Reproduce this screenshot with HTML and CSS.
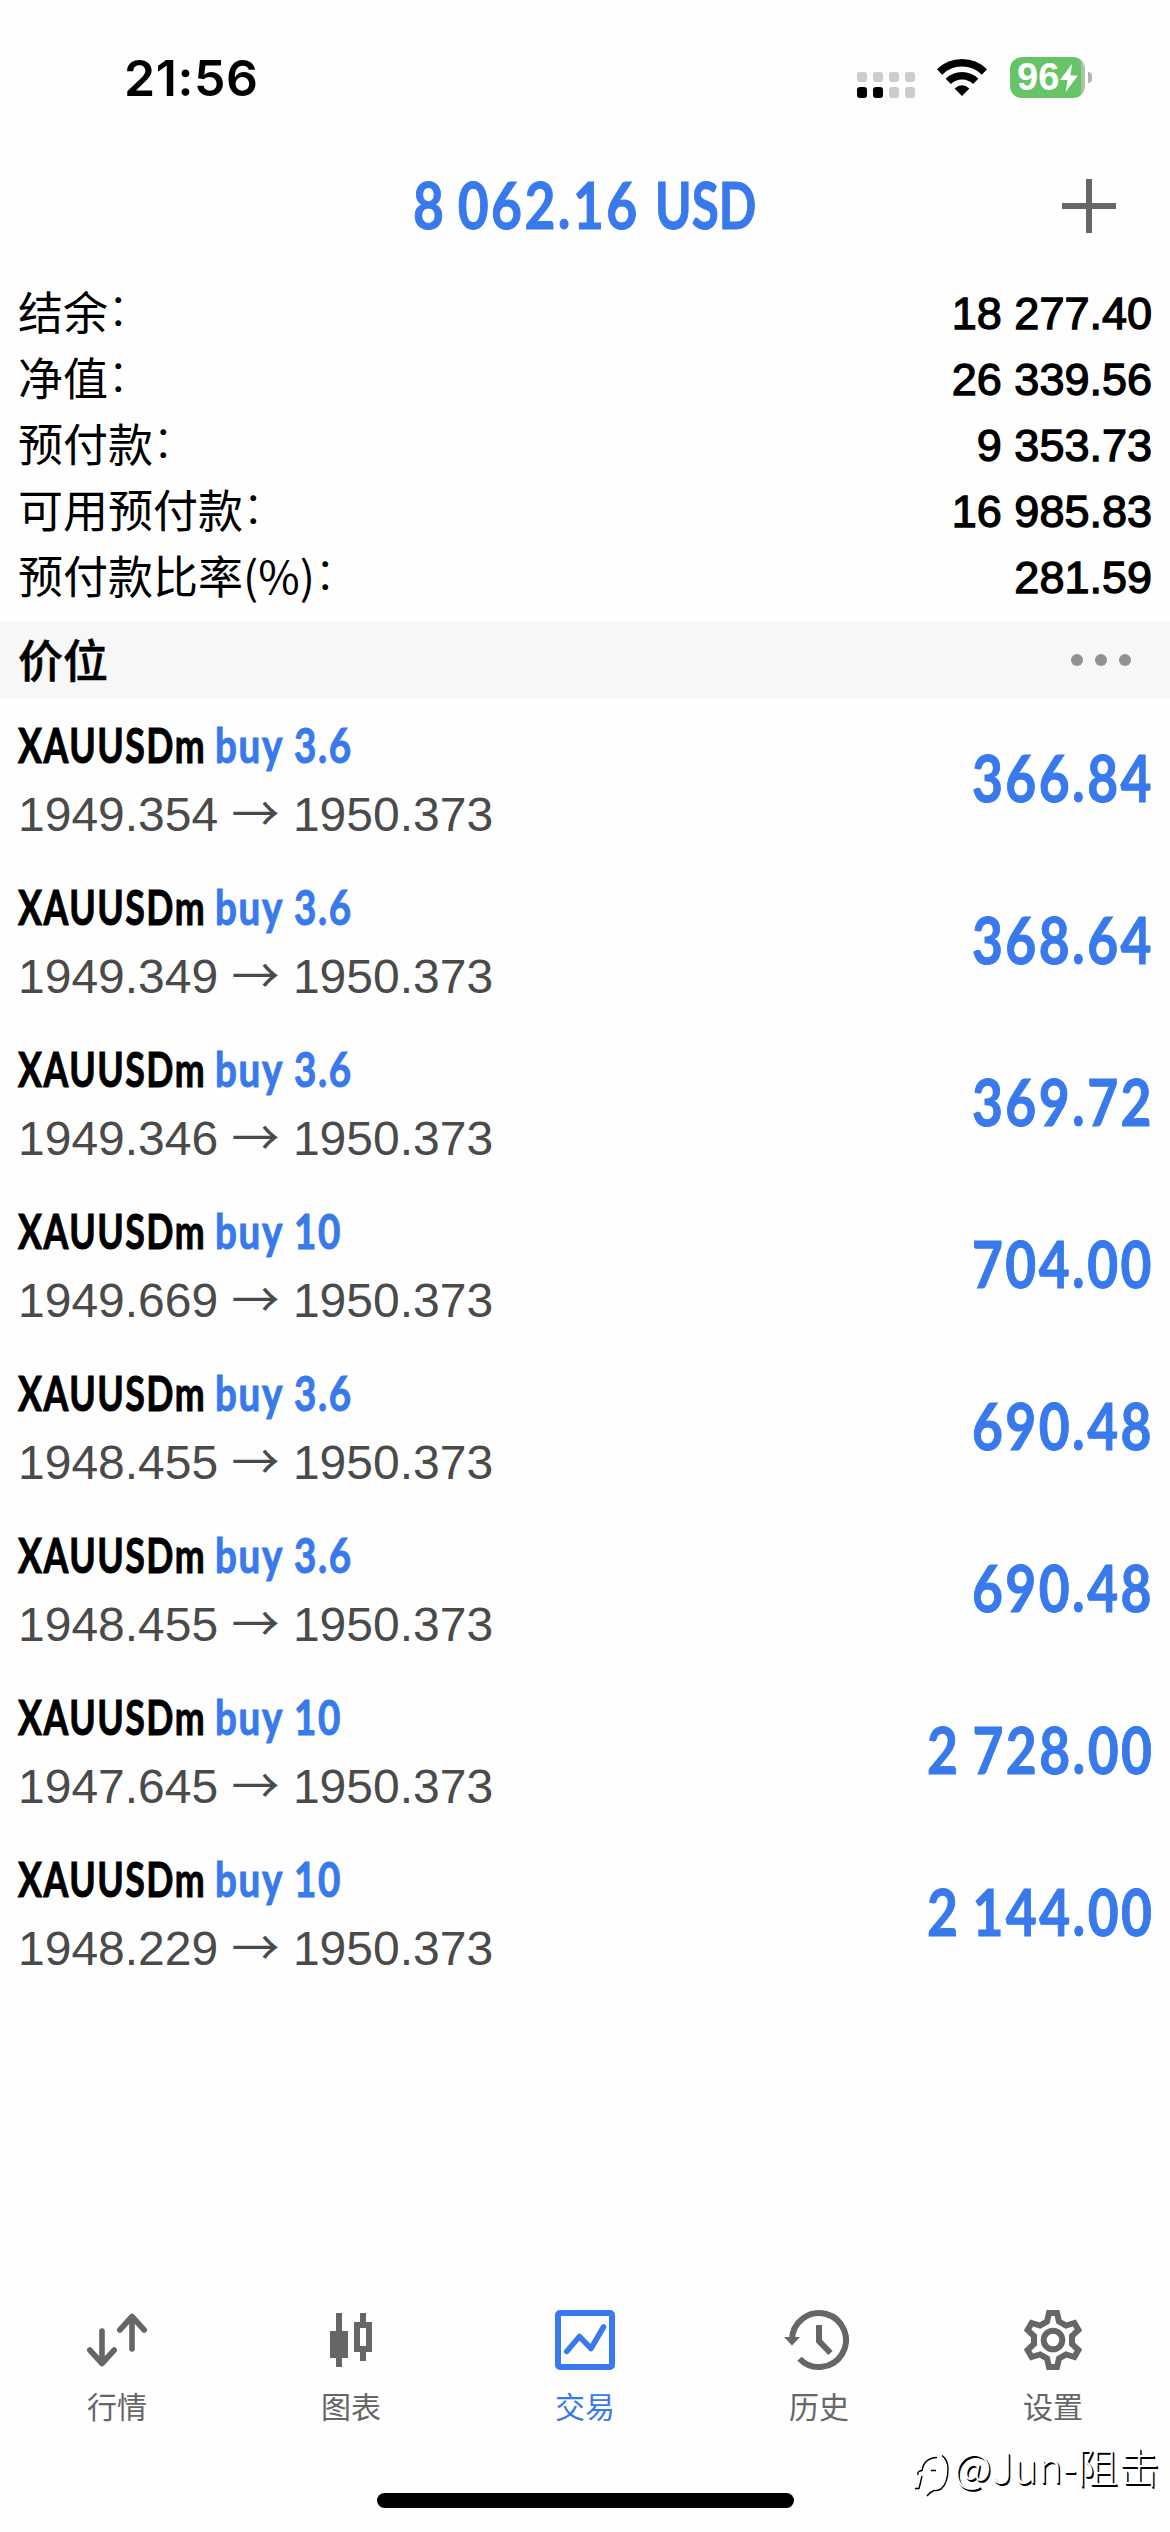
FILE: index.html
```html
<!DOCTYPE html>
<html lang="zh-CN">
<head>
<meta charset="utf-8">
<title>交易</title>
<link rel="stylesheet" href="styles.css">
</head>
<body>
<div class="screen">
  <div class="status">
    <div class="time">21:56</div>
    <div class="indicators">
      <svg class="signal" viewBox="0 0 58 26" width="58" height="26">
        <g fill="#ccc"><rect width="10" height="10" rx="3"/><rect x="16" width="10" height="10" rx="3"/><rect x="32" width="10" height="10" rx="3"/><rect x="48" width="10" height="10" rx="3"/><rect x="32" y="15" width="10" height="11" rx="3"/><rect x="48" y="15" width="10" height="11" rx="3"/></g>
        <rect y="15" width="10" height="11" rx="3"/><rect x="16" y="15" width="10" height="11" rx="3"/>
      </svg>
      <svg class="wifi" viewBox="0 0 50 37" width="50" height="37">
        <path d="M25 37 L17.600 29.400 Q25 23 32.400 29.400Z"/>
        <g fill="none" stroke="#000" stroke-width="7.500"><path d="M11.300 22.300A19.500 19.500 0 0 1 38.700 22.300"/><path d="M2.600 13A32 32 0 0 1 47.400 13"/></g>
      </svg>
      <div class="battery"><span class="level">96</span><svg viewBox="0 0 18 28" width="18" height="28"><path d="M12 0 0 16h7.500L5.500 28 18 11.500H10.500z" fill="#fff"/></svg></div>
      <div class="tip"></div>
    </div>
  </div>

  <header class="title-bar">
    <h1 class="title"><span class="cond title-num">8 062.16</span><span class="cond title-cur">USD</span></h1>
    <svg class="plus" viewBox="0 0 54 54" width="54" height="54"><path d="M27 0V54M0 27H54" stroke="#666" stroke-width="6"/></svg>
  </header>

  <dl class="summary">
    <div class="line"><dt>结余<span class="colon">：</span></dt><dd>18 277.40</dd></div>
    <div class="line"><dt>净值<span class="colon">：</span></dt><dd>26 339.56</dd></div>
    <div class="line"><dt>预付款<span class="colon">：</span></dt><dd>9 353.73</dd></div>
    <div class="line"><dt>可用预付款<span class="colon">：</span></dt><dd>16 985.83</dd></div>
    <div class="line"><dt>预付款比率(%)<span class="colon">：</span></dt><dd>281.59</dd></div>
  </dl>

  <div class="section"><h2>价位</h2><div class="more"><i></i><i></i><i></i></div></div>

  <main class="positions">
    <div class="position"><div class="info"><div class="deal"><span class="cond symbol">XAUUSDm</span><span class="cond side">buy 3.6</span></div><div class="prices">1949.354 <span class="arrow">→</span> 1950.373</div></div><div class="cond profit">366.84</div></div>
    <div class="position"><div class="info"><div class="deal"><span class="cond symbol">XAUUSDm</span><span class="cond side">buy 3.6</span></div><div class="prices">1949.349 <span class="arrow">→</span> 1950.373</div></div><div class="cond profit">368.64</div></div>
    <div class="position"><div class="info"><div class="deal"><span class="cond symbol">XAUUSDm</span><span class="cond side">buy 3.6</span></div><div class="prices">1949.346 <span class="arrow">→</span> 1950.373</div></div><div class="cond profit">369.72</div></div>
    <div class="position"><div class="info"><div class="deal"><span class="cond symbol">XAUUSDm</span><span class="cond side">buy 10</span></div><div class="prices">1949.669 <span class="arrow">→</span> 1950.373</div></div><div class="cond profit">704.00</div></div>
    <div class="position"><div class="info"><div class="deal"><span class="cond symbol">XAUUSDm</span><span class="cond side">buy 3.6</span></div><div class="prices">1948.455 <span class="arrow">→</span> 1950.373</div></div><div class="cond profit">690.48</div></div>
    <div class="position"><div class="info"><div class="deal"><span class="cond symbol">XAUUSDm</span><span class="cond side">buy 3.6</span></div><div class="prices">1948.455 <span class="arrow">→</span> 1950.373</div></div><div class="cond profit">690.48</div></div>
    <div class="position"><div class="info"><div class="deal"><span class="cond symbol">XAUUSDm</span><span class="cond side">buy 10</span></div><div class="prices">1947.645 <span class="arrow">→</span> 1950.373</div></div><div class="cond profit">2 728.00</div></div>
    <div class="position"><div class="info"><div class="deal"><span class="cond symbol">XAUUSDm</span><span class="cond side">buy 10</span></div><div class="prices">1948.229 <span class="arrow">→</span> 1950.373</div></div><div class="cond profit">2 144.00</div></div>
  </main>

  <nav class="tabs">
    <div class="tab"><svg viewBox="-35 -35 70 70" width="70" height="70"><g fill="none" stroke="currentColor" stroke-width="5.600" stroke-linecap="round" stroke-linejoin="round"><path d="M-15-9V23M-27.200 10-15 23.500-2.800 10"/><path d="M15 9V-23M2.800-10 15-23.500 27.200-10"/></g></svg><span>行情</span></div>
    <div class="tab"><svg viewBox="-35 -35 70 70" width="70" height="70"><g fill="currentColor"><path d="M-15-27h6V27h-6z"/><path d="M-21-9h18V18h-18z"/><path d="M9-27h6v9h6v30h-6v9H9v-9H3v-30h6zM9-12V6h6v-18z" fill-rule="evenodd"/></g></svg><span>图表</span></div>
    <div class="tab active"><svg viewBox="-35 -35 70 70" width="70" height="70"><g fill="none" stroke="currentColor" stroke-width="6"><rect x="-27" y="-27" width="54" height="54" rx="2"/><path d="M-18.300 11.500-5.600-3.500 6 8.500 18.500-13" stroke-width="5.500" stroke-linecap="round" stroke-linejoin="round"/></g></svg><span>交易</span></div>
    <div class="tab"><svg viewBox="-35 -35 70 70" width="70" height="70"><g fill="none" stroke="currentColor" stroke-width="6"><path d="M-27 0A27 27 0 1 1-19.500 18.700M0-15V1L11.500 13"/></g><path d="M-35-3h16l-8 8.500z" fill="currentColor"/></svg><span>历史</span></div>
    <div class="tab"><svg viewBox="-35 -35 70 70" width="70" height="70"><g fill="none" stroke="currentColor" stroke-width="6"><circle r="9.300"/><path d="M-4-27H4L6-18.500 13-14.400 21.400-17 25.400-10 19-4V4L25.400 10 21.400 17 13 14.400 6 18.500 4 27H-4L-6 18.500-13 14.400-21.400 17-25.400 10-19 4V-4L-25.400-10-21.400-17-13-14.400-6-18.500z"/></g></svg><span>设置</span></div>
  </nav>
  <div class="home"></div>
  <div class="watermark"><svg viewBox="0 0 36 42" width="36" height="42"><path d="M1 33.500H5Q6.500 28 8 21M4 20Q3 16 8 15.500Q10 3 23 2.500M17 15.500H22M28 .500Q34 5 34 14Q34 28 27 34Q23 36 20 35.500Q16 37 13 41" fill="none" stroke="#000" stroke-width="1.400"/></svg><span>@Jun-阻击</span></div>
</div>
</body>
</html>
```
FILE: styles.css
```css
* { box-sizing: border-box; margin: 0; padding: 0; }
body { background: #fefefe; color: #000; font-family: "Liberation Sans", "Noto Sans CJK SC", sans-serif; }
.screen { position: relative; width: 1170px; height: 2532px; display: flex; flex-direction: column; overflow: hidden; }

.status { height: 156px; display: flex; justify-content: space-between; padding: 0 78px 0 124px; }
.time { font: 600 50px/60px Inter, sans-serif; letter-spacing: .6px; margin-top: 48px; }
.indicators { display: flex; align-items: flex-start; }
.signal { margin-top: 72px; }
.wifi { margin: 59px 23px 0 22px; }
.battery { margin-top: 57px; width: 75px; height: 41px; border-radius: 12px; background: linear-gradient(90deg, #65c466 71px, #a9c4a9 71px); display: flex; align-items: center; padding-left: 7px; gap: 1px; }
.level { font: 700 38px/41px "Liberation Sans", sans-serif; color: #fff; }
.tip { width: 4px; height: 11px; margin: 72px 0 0 3px; border-radius: 0 4px 4px 0; background: #b5b5b5; }

.cond { display: inline-block; font-family: Lato, sans-serif; font-weight: 700; white-space: pre; transform-origin: 0 50%; -webkit-text-stroke: 1px currentColor; }
.title-bar { height: 132px; display: flex; align-items: flex-start; justify-content: space-between; padding: 23px 54px 0 413px; }
.title { display: flex; font-size: 65px; line-height: 50px; color: #3879eb; }
.title-num { width: 242px; letter-spacing: 3px; word-spacing: -5px; transform: scaleX(.82); }
.title-cur { width: 104px; transform: scaleX(.76); }
.plus { display: block; }

.summary { height: 333px; padding: 0 18px; font-size: 45px; }
.line { height: 66px; display: flex; justify-content: space-between; }
.line dt { font-family: "Noto Sans CJK SC", sans-serif; font-weight: 400; line-height: 46px; }
.colon { display: inline-block; font-weight: 300; transform: translate(-1px, -4px); }
.line dd { -webkit-text-stroke: 1.3px #000; line-height: 52px; }

.section { height: 77px; background: #f7f7f7; display: flex; justify-content: space-between; align-items: center; padding: 0 39px 0 18px; }
.section h2 { font: 500 45px/75px "Noto Sans CJK SC", sans-serif; height: 77px; -webkit-text-stroke: .5px #000; }
.more { display: flex; gap: 12px; }
.more i { width: 12px; height: 12px; border-radius: 50%; background: #929292; }

.positions { flex: 1; padding-top: 17px; }
.position { height: 162px; display: flex; justify-content: space-between; padding: 0 18px; }
.deal { height: 65px; display: flex; font-size: 47px; line-height: 60px; letter-spacing: 2px; }
.symbol { width: 197px; transform: scaleX(.76); }
.side { color: #3879eb; transform: scaleX(.82); }
.prices { font-size: 48px; line-height: 70px; color: #4a4a4a; white-space: pre; }
.arrow { font-family: "Noto Sans CJK SC", sans-serif; line-height: 0; }
.profit { font-size: 65px; line-height: 125px; letter-spacing: 3px; word-spacing: -4px; color: #3879eb; transform: translateX(2px) scaleX(.82); transform-origin: 100% 50%; }

.tabs { height: 232px; display: flex; }
.tab { flex: 1; display: flex; flex-direction: column; align-items: center; color: #666; padding-top: 5px; }
.tab span { font: 400 30px/44px "Noto Sans CJK SC", sans-serif; margin-top: 8px; }
.active { color: #3879eb; }
.home { position: absolute; left: 377px; top: 2493px; width: 417px; height: 15px; border-radius: 8px; background: #000; }
.watermark { position: absolute; left: 914px; top: 2433px; display: flex; align-items: center; gap: 4px; font: 300 41px/56px "Noto Sans CJK SC", sans-serif; letter-spacing: .5px; color: #fff; text-shadow: 1px 1px 0 #000, 1.5px 1.5px 0 #000; white-space: nowrap; }
.watermark svg { margin-top: 22px; }
```
